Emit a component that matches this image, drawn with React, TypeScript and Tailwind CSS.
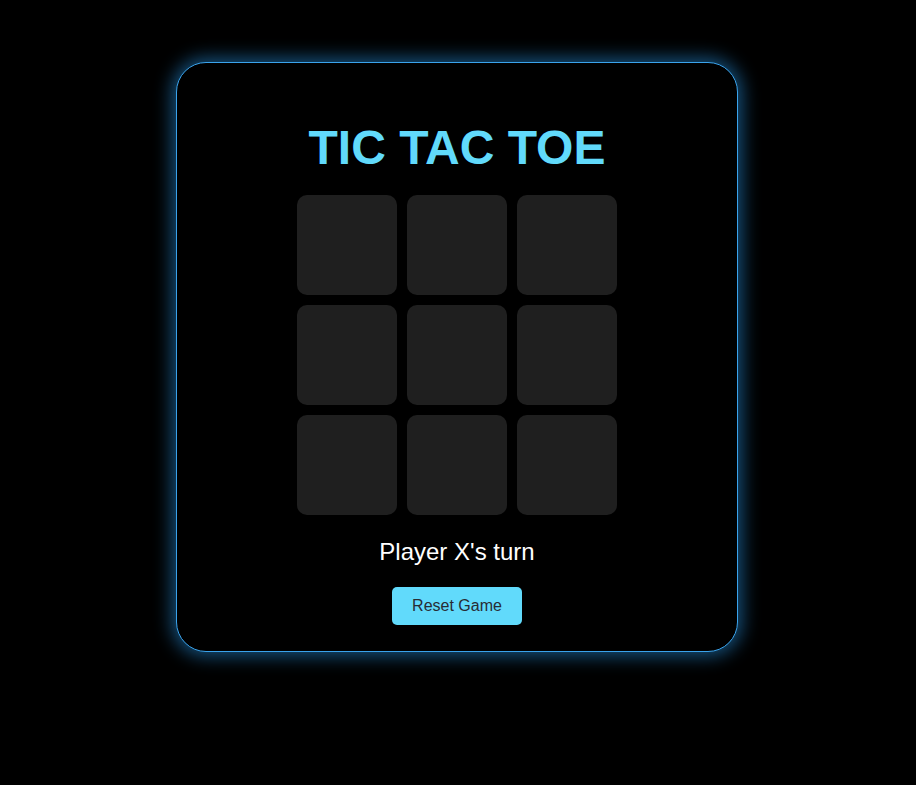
import React, { useState } from "react";

export default function App() {
  const [board, setBoard] = useState<(string | null)[]>(Array(9).fill(null));
  const [xTurn, setXTurn] = useState(true);

  const play = (i: number) => {
    if (board[i]) return;
    const next = board.slice();
    next[i] = xTurn ? "X" : "O";
    setBoard(next);
    setXTurn(!xTurn);
  };

  const reset = () => {
    setBoard(Array(9).fill(null));
    setXTurn(true);
  };

  return (
    <div className="min-h-[785px] bg-black pt-[62px] pr-[2px] font-['Liberation_Sans',Arial,sans-serif]">
      <div className="mx-auto w-[562px] rounded-[30px] border border-[#3aa3ec] bg-black pt-[57px] pb-[26px] shadow-[0_0_18px_4px_rgba(40,150,230,0.55)] flex flex-col items-center">
        {/* Title */}
        <h1 className="text-[48px] leading-[55px] font-bold text-[#61dafb]">TIC TAC TOE</h1>

        {/* Board */}
        <div className="mt-[20px] grid grid-cols-[repeat(3,100px)] gap-[10px]">
          {board.map((cell, i) => (
            <button
              key={i}
              onClick={() => play(i)}
              className="h-[100px] w-[100px] rounded-[10px] bg-[#1f1f1f] text-[48px] font-bold text-[#61dafb]"
            >
              {cell}
            </button>
          ))}
        </div>

        <p className="mt-[23px] text-[24px] leading-[28px] text-white">Player {xTurn ? "X" : "O"}'s turn</p>

        <button
          onClick={reset}
          className="mt-[21px] h-[38px] rounded-[5px] bg-[#61dafb] px-[20px] text-[16px] text-[#282c34]"
        >
          Reset Game
        </button>
      </div>
    </div>
  );
}
